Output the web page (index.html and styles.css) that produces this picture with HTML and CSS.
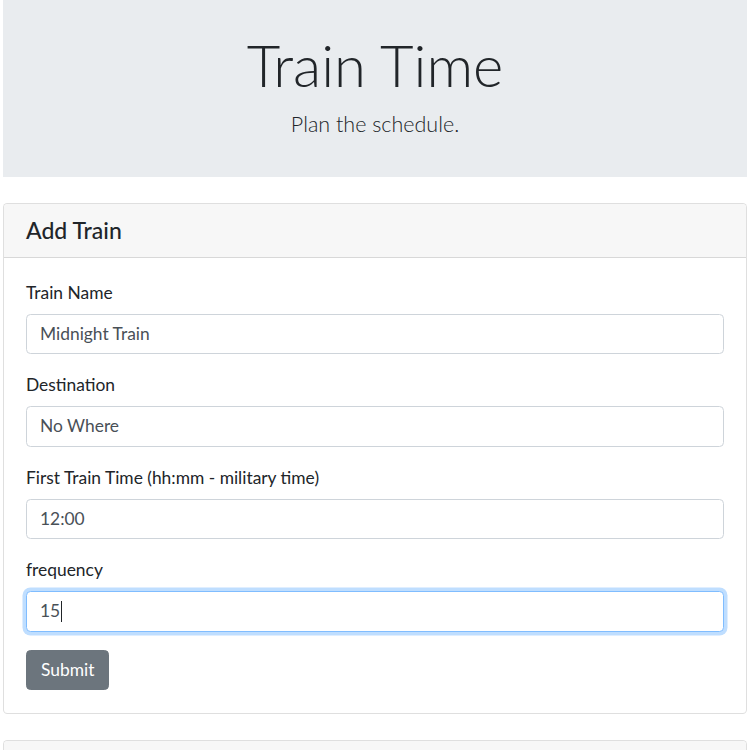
FILE: index.html
```html
<!DOCTYPE html>
<html lang="en">
<head>
<meta charset="utf-8">
<title>Train Time</title>
<link rel="stylesheet" href="styles.css">
</head>
<body>
<div class="page">
  <header class="jumbotron">
    <h1 class="display">Train Time</h1>
    <p class="lead">Plan the schedule.</p>
  </header>

  <section class="card">
    <div class="card-header"><h4 class="card-title">Add Train</h4></div>
    <form class="card-body">
      <div class="form-group">
        <label class="label">Train Name</label>
        <div class="form-control">Midnight Train</div>
      </div>
      <div class="form-group">
        <label class="label">Destination</label>
        <div class="form-control">No Where</div>
      </div>
      <div class="form-group">
        <label class="label">First Train Time (hh:mm - military time)</label>
        <div class="form-control">12:00</div>
      </div>
      <div class="form-group">
        <label class="label">frequency</label>
        <div class="form-control focused">15<span class="caret"></span></div>
      </div>
      <button type="button" class="btn">Submit</button>
    </form>
  </section>

  <section class="card card-next">
    <div class="card-header"><h4 class="card-title">&nbsp;</h4></div>
  </section>
</div>
</body>
</html>
```

FILE: styles.css
```css
* { box-sizing: border-box; }

html, body {
  margin: 0;
  padding: 0;
  background: #fff;
}

body {
  font-family: Lato, "Open Sans", "Liberation Sans", sans-serif;
  font-size: 17.4px;
  line-height: 1.5;
  color: #212529;
  overflow: hidden;
  height: 750px;
}

.page {
  padding: 0 3px;
}

.jumbotron {
  background: #e9ecef;
  padding: 29px 16px 37px;
  text-align: center;
  margin-bottom: 26px;
}

.display {
  margin: 0 0 7px;
  font-size: 58px;
  font-weight: 300;
  line-height: 72px;
  color: #212529;
}

.lead {
  margin: 0;
  font-size: 21.5px;
  font-weight: 300;
  line-height: 32px;
}

.card {
  border: 1px solid rgba(0, 0, 0, 0.125);
  border-radius: 4.5px;
  background: #fff;
  overflow: hidden;
}

.card-next {
  margin-top: 26px;
}

.card-header {
  background: #f7f7f7;
  border-bottom: 1px solid rgba(0, 0, 0, 0.125);
  padding: 12px 22px 12px;
}

.card-title {
  margin: 0;
  font-size: 23px;
  font-weight: 500;
  line-height: 28.5px;
}

.card-body {
  padding: 22px 22px 23px;
  display: flex;
  flex-direction: column;
  align-items: flex-start;
}

.form-group {
  width: 100%;
  margin-bottom: 18px;
  display: flex;
  flex-direction: column;
}

.label {
  display: block;
  margin-bottom: 8.5px;
  line-height: 25.5px;
}

.form-control {
  height: 40.5px;
  padding: 0 13px;
  display: flex;
  align-items: center;
  border: 1px solid #ced4da;
  border-radius: 4.5px;
  color: #495057;
  background: #fff;
}

.form-control.focused {
  border-color: #80bdff;
  box-shadow: 0 0 0 3.5px rgba(0, 123, 255, 0.25);
}

.caret {
  display: inline-block;
  width: 1px;
  height: 21px;
  margin-left: 1px;
  background: #212529;
}

.btn {
  font: inherit;
  height: 40.5px;
  padding: 0 14px;
  border: 1px solid #6c757d;
  border-radius: 4.5px;
  background: #6c757d;
  color: #fff;
  line-height: 1.5;
  cursor: pointer;
}
```
